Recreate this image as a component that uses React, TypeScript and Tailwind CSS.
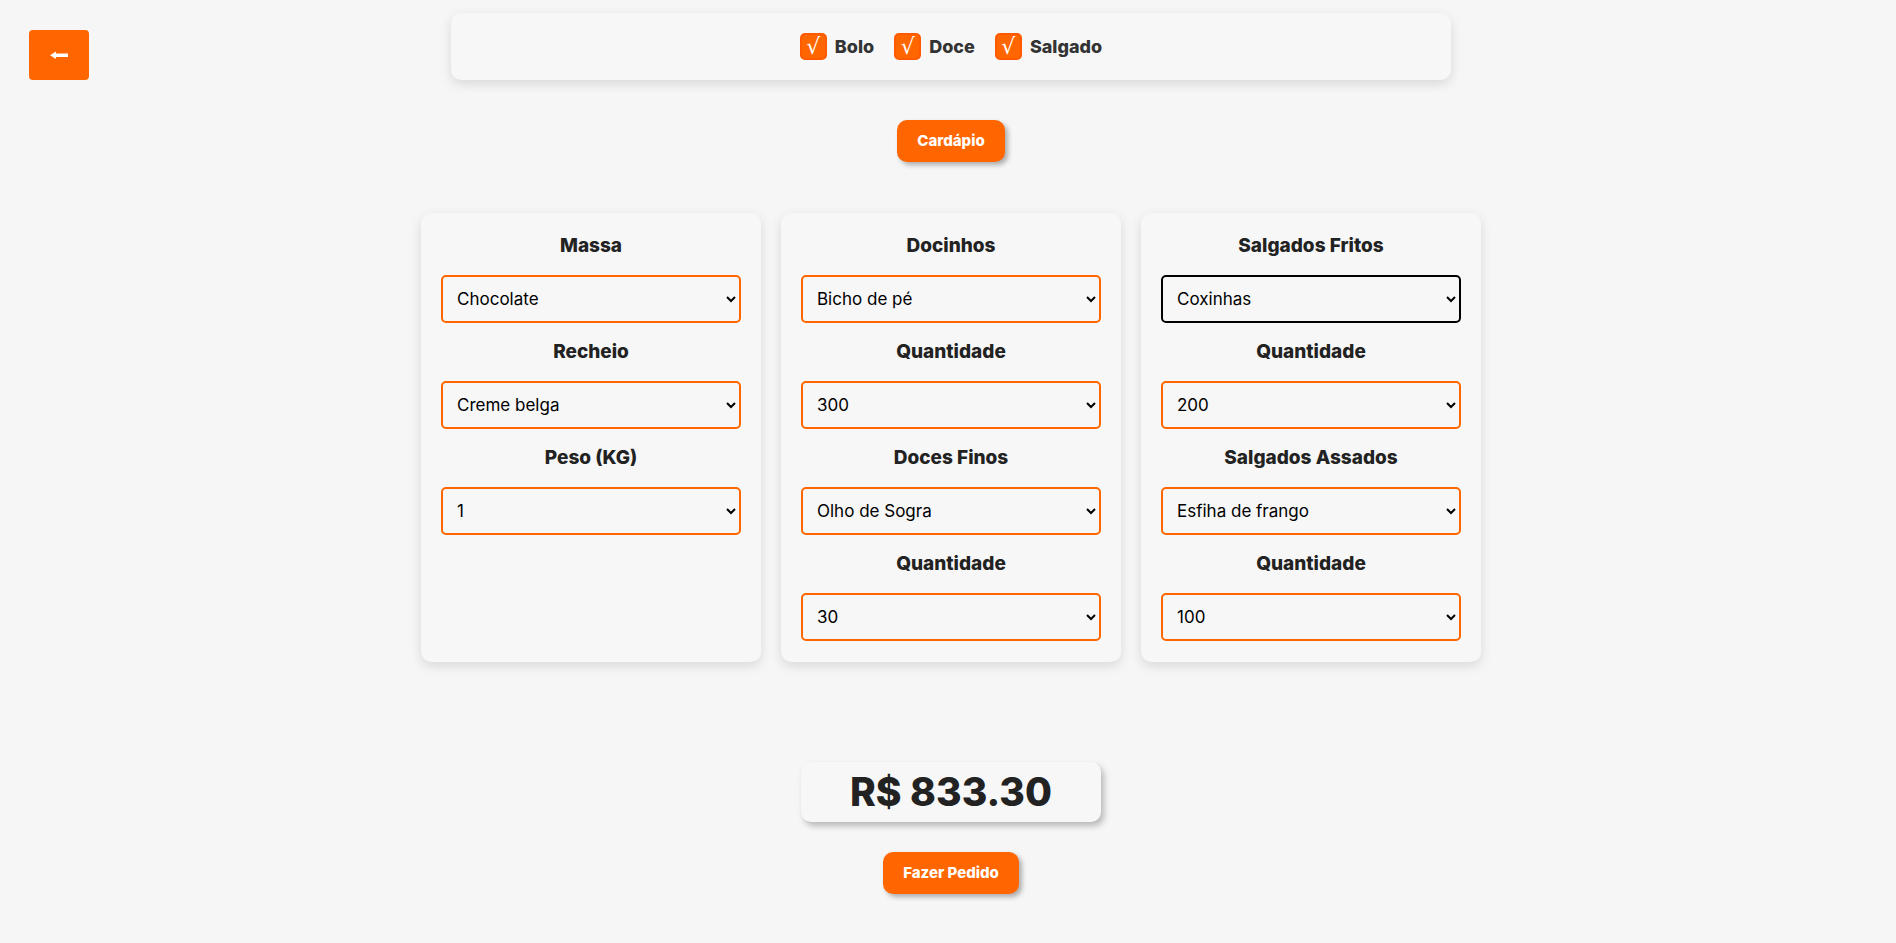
import { useState } from 'react';

const font = "font-['Inter','Liberation_Sans',sans-serif]";

type Field = { label: string; options: string[]; value: string; focused?: boolean };

const columns: Field[][] = [
  [
    { label: 'Massa', options: ['Chocolate', 'Baunilha', 'Red velvet'], value: 'Chocolate' },
    { label: 'Recheio', options: ['Creme belga', 'Brigadeiro', 'Morango'], value: 'Creme belga' },
    { label: 'Peso (KG)', options: ['1', '2', '3', '4'], value: '1' },
  ],
  [
    { label: 'Docinhos', options: ['Bicho de pé', 'Brigadeiro', 'Beijinho'], value: 'Bicho de pé' },
    { label: 'Quantidade', options: ['100', '200', '300'], value: '300' },
    { label: 'Doces Finos', options: ['Olho de Sogra', 'Camafeu'], value: 'Olho de Sogra' },
    { label: 'Quantidade', options: ['10', '20', '30'], value: '30' },
  ],
  [
    { label: 'Salgados Fritos', options: ['Coxinhas', 'Kibes', 'Risoles'], value: 'Coxinhas', focused: true },
    { label: 'Quantidade', options: ['100', '200', '300'], value: '200' },
    { label: 'Salgados Assados', options: ['Esfiha de frango', 'Empada'], value: 'Esfiha de frango' },
    { label: 'Quantidade', options: ['50', '100', '150'], value: '100' },
  ],
];

const categories = ['Bolo', 'Doce', 'Salgado'];

function Check({ label }: { label: string }) {
  const [on, setOn] = useState(true);
  return (
    <label className="flex items-center gap-[8px] cursor-pointer" onClick={() => setOn(!on)}>
      <span className="flex h-[27px] w-[27px] items-center justify-center rounded-[5px] border-2 border-[#ff5a00] bg-[#ff6600] pt-[1px] text-[22px] leading-none text-white font-['DejaVu_Sans',sans-serif]">
        {on ? '√' : ''}
      </span>
      <span className="text-[18px] font-extrabold text-[#333]">{label}</span>
    </label>
  );
}

function Select({ field }: { field: Field }) {
  return (
    <select
      defaultValue={field.value}
      className={`h-[48px] w-full rounded-[5px] border-2 bg-transparent pl-[10px] pr-[8px] text-[17px] text-black ${
        field.focused ? 'border-black' : 'border-[#ff6600]'
      }`}
    >
      {field.options.map((o) => (
        <option key={o}>{o}</option>
      ))}
    </select>
  );
}

export default function App() {
  return (
    <div className={`min-h-screen bg-[#f6f6f6] pl-[6px] ${font}`}>
      {/* top row */}
      <div className="grid grid-cols-[1fr_1000px_1fr]">
        <div>
          <button className="ml-[23px] mt-[30px] flex h-[50px] w-[60px] items-center justify-center rounded-[4px] bg-[#ff6600]">
            <svg width="18" height="8" viewBox="0 0 18 8">
              <rect x="5" y="2.5" width="13" height="3.5" fill="white" />
              <polygon points="0,4.2 6,0.5 6,8" fill="white" />
            </svg>
          </button>
        </div>
        <div className="mt-[13px] flex h-[67px] items-center justify-center gap-[20px] rounded-[10px] bg-[#f7f7f7] shadow-[0_4px_12px_rgba(0,0,0,0.12)]">
          {categories.map((c) => (
            <Check key={c} label={c} />
          ))}
        </div>
        <div />
      </div>

      <div className="flex flex-col items-center">
        <button className="mt-[40px] h-[42px] rounded-[10px] bg-[#ff6600] px-[20px] text-[15px] font-extrabold text-white shadow-[3px_3px_5px_rgba(0,0,0,0.3)]">
          Cardápio
        </button>

        {/* cards */}
        <div className="mt-[51px] grid grid-cols-[340px_340px_340px] gap-[20px]">
          {columns.map((col, i) => (
            <div
              key={i}
              className="rounded-[10px] bg-[#f7f7f7] px-[20px] pb-[21px] pt-[4px] shadow-[0_4px_12px_rgba(0,0,0,0.12)]"
            >
              {col.map((f, j) => (
                <div key={j}>
                  <div className="flex h-[58px] items-center justify-center text-[19px] font-extrabold text-[#222]">
                    {f.label}
                  </div>
                  <Select field={f} />
                </div>
              ))}
            </div>
          ))}
        </div>

        {/* total */}
        <div className="mt-[100px] flex h-[60px] w-[300px] items-center justify-center rounded-[10px] bg-[#f7f7f7] text-[39px] font-extrabold text-[#222] shadow-[3px_4px_6px_rgba(0,0,0,0.25)]">
          R$ 833.30
        </div>

        <button className="mt-[30px] h-[42px] rounded-[10px] bg-[#ff6600] px-[20px] text-[15px] font-extrabold text-white shadow-[3px_3px_5px_rgba(0,0,0,0.3)]">
          Fazer Pedido
        </button>
      </div>
    </div>
  );
}
